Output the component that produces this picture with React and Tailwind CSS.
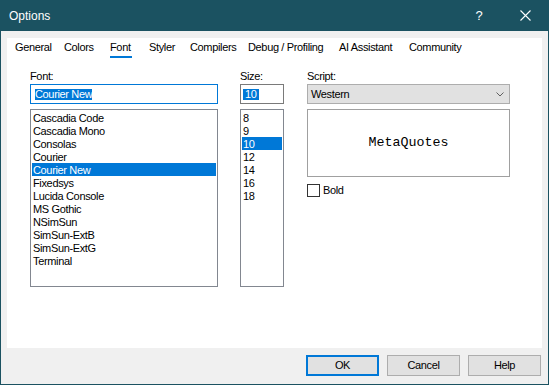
import { useState } from "react";

const TABS = [
  { label: "General", w: "w-[49px]" },
  { label: "Colors", w: "w-[46px]" },
  { label: "Font", w: "w-[39px]" },
  { label: "Styler", w: "w-[41px]" },
  { label: "Compilers", w: "w-[58px]" },
  { label: "Debug / Profiling", w: "w-[91px]" },
  { label: "AI Assistant", w: "w-[70px]" },
  { label: "Community", w: "w-auto" },
];

const FONTS = [
  "Cascadia Code",
  "Cascadia Mono",
  "Consolas",
  "Courier",
  "Courier New",
  "Fixedsys",
  "Lucida Console",
  "MS Gothic",
  "NSimSun",
  "SimSun-ExtB",
  "SimSun-ExtG",
  "Terminal",
];

const SIZES = ["8", "9", "10", "12", "14", "16", "18"];

function ListBox({ items, selected, className }) {
  return (
    <div className={`h-[178px] border border-[#828790] bg-white px-[1px] py-[1px] ${className}`}>
      {items.map((item) => (
        <div
          key={item}
          className={`h-[13px] leading-[14px] pl-[1px] whitespace-nowrap ${
            item === selected ? "bg-[#0078d7] text-white" : "text-black"
          }`}
        >
          {item}
        </div>
      ))}
    </div>
  );
}

function Button({ children, focused }) {
  return (
    <div
      className={`w-[73px] h-[21px] flex items-center justify-center bg-[#e1e1e1] ${
        focused ? "border-2 border-[#0078d7]" : "border border-[#adadad]"
      }`}
    >
      {children}
    </div>
  );
}

export default function App() {
  const [bold, setBold] = useState(false);

  return (
    <div className="w-[549px] h-[385px] flex flex-col bg-[#1b5261] text-[11px] tracking-[-0.35px] text-black font-['Liberation_Sans',Arial,sans-serif]">
      {/* Title bar */}
      <div className="h-[31px] flex items-center text-white shrink-0">
        <span className="pl-[9px] text-[12px] tracking-normal">Options</span>
        <span className="ml-auto w-[30px] text-center text-[13px] tracking-normal">?</span>
        <div className="w-[46px] ml-[8px] mr-[1px] flex items-center justify-center">
          <svg width="11" height="11" viewBox="0 0 11 11">
            <path d="M0.5 0.5 L10.5 10.5 M10.5 0.5 L0.5 10.5" stroke="white" strokeWidth="1.1" />
          </svg>
        </div>
      </div>

      {/* Body */}
      <div className="flex-1 mx-[1px] mb-[1px] bg-[#f0f0f0] flex flex-col px-[6px] pt-[7px]">
        <div className="h-[310px] bg-white flex flex-col">
          {/* Tabs */}
          <div className="flex pl-[8px] pt-[3px]">
            {TABS.map((t) => (
              <div key={t.label} className={`${t.w} flex flex-col items-start`}>
                <span className="h-[13px] leading-[13px] whitespace-nowrap">{t.label}</span>
                {t.label === "Font" && <div className="mt-[2px] h-[2px] w-[22px] bg-[#0078d7]" />}
              </div>
            ))}
          </div>

          {/* Content */}
          <div className="flex pl-[23px] mt-[12px]">
            {/* Font column */}
            <div className="w-[188px] flex flex-col">
              <span className="h-[13px] leading-[13px]">Font:</span>
              <div className="mt-[1px] h-[20px] border border-[#0078d7] flex items-center pl-[4px]">
                <span className="bg-[#0078d7] text-white leading-[11px] h-[11px]">Courier New</span>
              </div>
              <ListBox items={FONTS} selected="Courier New" className="mt-[5px]" />
            </div>

            {/* Size column */}
            <div className="w-[44px] ml-[22px] flex flex-col">
              <span className="h-[13px] leading-[13px]">Size:</span>
              <div className="mt-[1px] h-[20px] border border-[#7a7a7a] flex items-center pl-[2px]">
                <span className="bg-[#0078d7] text-white leading-[11px] h-[11px] px-[2px]">10</span>
              </div>
              <ListBox items={SIZES} selected="10" className="mt-[5px]" />
            </div>

            {/* Script column */}
            <div className="w-[203px] ml-[23px] flex flex-col">
              <span className="h-[13px] leading-[13px]">Script:</span>
              <div className="mt-[1px] h-[20px] border border-[#adadad] bg-[#e1e1e1] flex items-center pl-[3px] pr-[5px]">
                <span>Western</span>
                <svg className="ml-auto" width="8" height="5" viewBox="0 0 8 5">
                  <path d="M0.5 0.5 L4 4 L7.5 0.5" stroke="#606060" strokeWidth="1" fill="none" />
                </svg>
              </div>
              <div className="mt-[5px] h-[68px] border border-[#a0a0a0] flex items-center justify-center">
                <span className="font-['Liberation_Mono','Courier_New',monospace] text-[13.33px] tracking-normal">
                  MetaQuotes
                </span>
              </div>
              <label className="mt-[6px] flex items-center cursor-default" onClick={() => setBold(!bold)}>
                <span className="w-[13px] h-[13px] border border-[#333333] bg-white flex items-center justify-center">
                  {bold && (
                    <svg width="9" height="9" viewBox="0 0 9 9">
                      <path d="M1 4.5 L3.5 7 L8 1.5" stroke="#333" strokeWidth="1.2" fill="none" />
                    </svg>
                  )}
                </span>
                <span className="ml-[3px] leading-[14px]">Bold</span>
              </label>
            </div>
          </div>
        </div>

        {/* Footer buttons */}
        <div className="flex justify-end gap-[8px] pt-[7px] pr-[1px]">
          <Button focused>OK</Button>
          <Button>Cancel</Button>
          <Button>Help</Button>
        </div>
      </div>
    </div>
  );
}
